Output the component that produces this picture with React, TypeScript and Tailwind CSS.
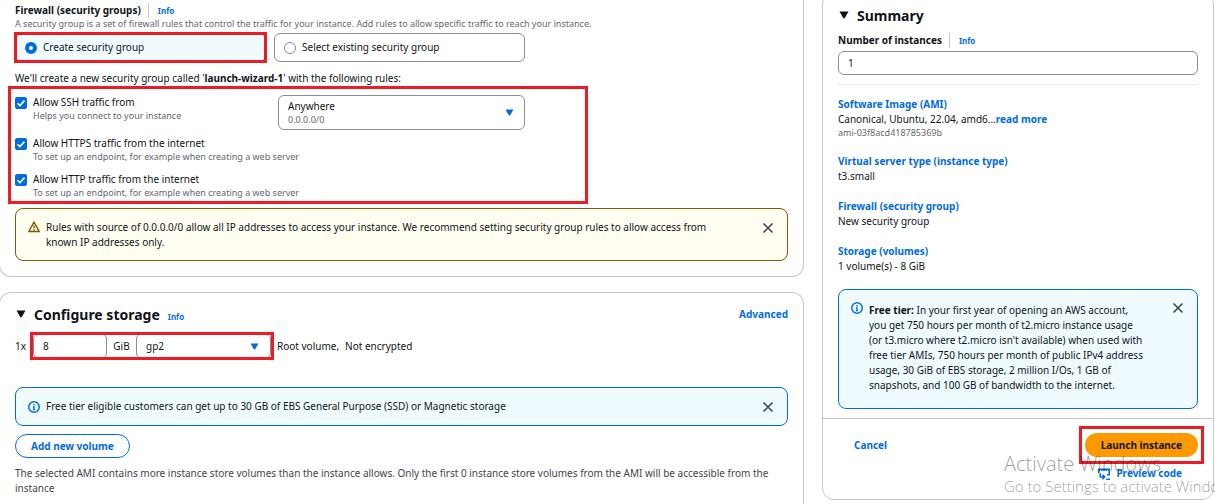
import React, { useState } from 'react';

type Rule = {
  id: string;
  label: string;
  hint: string;
};

type SummaryItem = {
  title: string;
  value: string;
};

const WEB_RULES: Rule[] = [
  { id: 'https', label: 'Allow HTTPS traffic from the internet', hint: 'To set up an endpoint, for example when creating a web server' },
  { id: 'http', label: 'Allow HTTP traffic from the internet', hint: 'To set up an endpoint, for example when creating a web server' },
];

const SUMMARY: SummaryItem[] = [
  { title: 'Virtual server type (instance type)', value: 't3.small' },
  { title: 'Firewall (security group)', value: 'New security group' },
  { title: 'Storage (volumes)', value: '1 volume(s) - 8 GiB' },
];

function Caret({ className }: { className: string }) {
  return (
    <svg viewBox="0 0 10 8" className={className} fill="currentColor" aria-hidden="true">
      <path d="M0.5 0.5h9L5.8 7a.9.9 0 0 1-1.6 0z" />
    </svg>
  );
}

function InfoIcon() {
  return (
    <svg viewBox="0 0 16 16" className="size-3 shrink-0 text-[#006ce0]" fill="none" stroke="currentColor" strokeWidth="2" aria-hidden="true">
      <circle cx="8" cy="8" r="7" />
      <path d="M8 11V8H6.5M8 4v2M6.5 11.5h3" strokeWidth="1.8" />
    </svg>
  );
}

function WarningIcon() {
  return (
    <svg viewBox="0 0 16 16" className="size-3 shrink-0 text-[#855900]" fill="none" stroke="currentColor" strokeWidth="2" strokeLinejoin="round" aria-hidden="true">
      <path d="M8 1.5 15 14H1z" />
      <path d="M8 6v4M8 11v2" strokeWidth="1.8" />
    </svg>
  );
}

function CodeIcon() {
  return (
    <svg viewBox="0 0 16 16" className="size-3 shrink-0" fill="none" stroke="currentColor" strokeWidth="2" aria-hidden="true">
      <path d="M1 7V1.5h14V9h-3" />
      <path d="M1 3h14" strokeDasharray="2 1" />
      <path d="M3 7v5h6M6 9l3 3-3 3M11 15h5" />
    </svg>
  );
}

function Dismiss() {
  return (
    <button type="button" aria-label="Dismiss" className="flex h-[15px] w-4 shrink-0 items-center justify-center text-[#424650]">
      <svg viewBox="0 0 12 12" className="size-3" fill="none" stroke="currentColor" strokeWidth="1.6" aria-hidden="true">
        <path d="M1.5 1.5l9 9M10.5 1.5l-9 9" />
      </svg>
    </button>
  );
}

function Highlight({ className }: { className: string }) {
  return <div className={`pointer-events-none absolute border-3 border-[#ed1c24] ${className}`} />;
}

function InfoLink() {
  return (
    <a href="#info" className="text-[8px] font-bold text-[#006ce0]">
      Info
    </a>
  );
}

function Hint({ children }: { children: React.ReactNode }) {
  return <p className="text-[9px] leading-3 text-[#656871]">{children}</p>;
}

function RuleCheckbox({ rule }: { rule: Rule }) {
  const [checked, setChecked] = useState(true);

  return (
    <div className="flex gap-1.5">
      <span className="relative mt-0.5 size-3 shrink-0">
        <input
          id={rule.id}
          type="checkbox"
          checked={checked}
          onChange={(e) => setChecked(e.target.checked)}
          className="block size-3 appearance-none rounded-xs border border-[#8c8c94] checked:border-[#006ce0] checked:bg-[#006ce0]"
        />
        {checked && (
          <svg viewBox="0 0 12 12" className="pointer-events-none absolute inset-0 size-3" fill="none" stroke="white" strokeWidth="1.6" aria-hidden="true">
            <path d="M2.5 6.2l2.4 2.4L9.5 3.6" />
          </svg>
        )}
      </span>
      <div>
        <label htmlFor={rule.id} className="block">
          {rule.label}
        </label>
        <Hint>{rule.hint}</Hint>
      </div>
    </div>
  );
}

function FirewallCard() {
  const [group, setGroup] = useState('create');
  const tile = 'flex h-[29px] items-center gap-1.5 rounded-md border px-[9px]';
  const radio = 'size-3 appearance-none rounded-full border border-[#8c8c94] checked:border-4 checked:border-[#006ce0] bg-white';

  return (
    <section className="-ml-px rounded-b-xl border border-t-0 border-[#c6c6cd] px-[15px] pt-[3px] pb-[15px]">
      <div className="flex items-center">
        <h3 className="border-r border-[#c6c6cd] pr-[7px] font-bold">Firewall (security groups)</h3>
        <span className="flex pl-[9px]">
          <InfoLink />
        </span>
      </div>
      <Hint>
        A security group is a set of firewall rules that control the traffic for your instance. Add rules to allow specific traffic to reach your instance.
      </Hint>

      <div className="mt-[3px] grid max-w-[510px] grid-cols-2 gap-2">
        <div className="relative">
          <label className={`${tile} border-[#006ce0] bg-[#f0fbff]`}>
            <input type="radio" name="group" checked={group === 'create'} onChange={() => setGroup('create')} className={radio} />
            Create security group
          </label>
          <Highlight className="-inset-px" />
        </div>
        <label className={`${tile} border-[#8c8c94]`}>
          <input type="radio" name="group" checked={group === 'existing'} onChange={() => setGroup('existing')} className={radio} />
          Select existing security group
        </label>
      </div>

      <p className="mt-[9px]">
        We'll create a new security group called '<b>launch-wizard-1</b>' with the following rules:
      </p>

      <div className="relative -mx-[7px] max-w-[580px] px-[7px] pt-[9px] pb-[5px]">
        <div className="flex items-start">
          <div className="w-[263px]">
            <RuleCheckbox rule={{ id: 'ssh', label: 'Allow SSH traffic from', hint: 'Helps you connect to your instance' }} />
          </div>
          <div className="relative w-[247px]">
            <select aria-label="SSH source" className="block h-[35px] w-full appearance-none rounded-md border border-[#8c8c94] bg-white px-[9px] pb-3">
              <option>Anywhere</option>
              <option>My IP</option>
            </select>
            <div className="pointer-events-none absolute bottom-1 left-2.5">
              <Hint>0.0.0.0/0</Hint>
            </div>
            <Caret className="pointer-events-none absolute top-3.5 right-[11px] h-[7px] w-[9px] text-[#006ce0]" />
          </div>
        </div>
        <div className="mt-1.5 flex flex-col gap-[9px]">
          {WEB_RULES.map((rule) => (
            <RuleCheckbox key={rule.id} rule={rule} />
          ))}
        </div>
        <Highlight className="inset-0" />
      </div>

      <div className="mt-1 flex items-start gap-1.5 rounded-lg border border-[#855900] bg-[#fffef0] pt-[11px] pr-[11px] pb-2.5 pl-3">
        <span className="mt-px">
          <WarningIcon />
        </span>
        <p className="flex-1 pr-10">
          Rules with source of 0.0.0.0/0 allow all IP addresses to access your instance. We recommend setting security group rules to allow access from known IP addresses only.
        </p>
        <Dismiss />
      </div>
    </section>
  );
}

function StorageCard() {
  const [size, setSize] = useState('8');

  return (
    <section className="-ml-px mt-[15px] flex-1 rounded-t-xl border border-b-0 border-[#c6c6cd] px-[15px] pt-[9px]">
      <div className="flex h-6 items-center">
        <Caret className="ml-px h-2 w-2.5" />
        <h2 className="ml-2 text-[14px] font-bold">Configure storage</h2>
        <span className="mt-1 ml-2 flex">
          <InfoLink />
        </span>
        <a href="#advanced" className="ml-auto font-bold text-[#006ce0]">
          Advanced
        </a>
      </div>

      <div className="mt-[7px] flex items-center">
        <span className="w-[18px]">1x</span>
        <div className="relative flex items-center">
          <input
            aria-label="Size in GiB"
            value={size}
            onChange={(e) => setSize(e.target.value)}
            className="h-[26px] w-[74px] rounded-md border border-[#8c8c94] px-[9px]"
          />
          <span className="w-[29px] text-center">GiB</span>
          <div className="relative w-[135px]">
            <select aria-label="Volume type" className="block h-[26px] w-full appearance-none rounded-md border border-[#8c8c94] bg-white px-[9px]">
              <option>gp2</option>
              <option>gp3</option>
            </select>
            <Caret className="pointer-events-none absolute top-2.5 right-3 h-[7px] w-[9px] text-[#006ce0]" />
          </div>
          <Highlight className="-inset-x-[3px] -inset-y-px" />
        </div>
        <span className="ml-1.5">Root volume,</span>
        <span className="ml-1.5">Not encrypted</span>
      </div>

      <div className="mt-7 flex items-center gap-1.5 rounded-lg border border-[#006ce0] bg-[#f0fbff] py-[11px] pr-[11px] pl-3">
        <InfoIcon />
        <p className="flex-1">Free tier eligible customers can get up to 30 GB of EBS General Purpose (SSD) or Magnetic storage</p>
        <Dismiss />
      </div>

      <button type="button" className="mt-2 h-6 rounded-full border border-[#006ce0] px-[15px] font-bold text-[#006ce0]">
        Add new volume
      </button>
      <p className="mt-2 text-[#424650]">
        The selected AMI contains more instance store volumes than the instance allows. Only the first 0 instance store volumes from the AMI will be accessible from the instance
      </p>
    </section>
  );
}

function SummaryCard() {
  const [count, setCount] = useState('1');

  return (
    <aside className="-mt-2 self-start rounded-xl border border-[#c6c6cd]">
      <div className="px-[15px] pt-2.5 pb-[9px]">
        <h2 className="flex h-6 items-center gap-2 text-[14px] font-bold">
          <Caret className="ml-px h-2 w-2.5" />
          Summary
        </h2>
        <div className="mt-1.5 flex items-center">
          <label htmlFor="count" className="border-r border-[#c6c6cd] pr-[7px] font-bold">
            Number of instances
          </label>
          <span className="flex pl-[9px]">
            <InfoLink />
          </span>
        </div>
        <input
          id="count"
          value={count}
          onChange={(e) => setCount(e.target.value)}
          className="mt-[3px] block h-6 w-full rounded-md border border-[#8c8c94] px-[9px]"
        />
        <hr className="mt-[9px] border-[#ebebf0]" />

        <div className="mt-3">
          <a href="#ami" className="font-bold text-[#006ce0]">
            Software Image (AMI)
          </a>
          <p>
            Canonical, Ubuntu, 22.04, amd6...
            <a href="#more" className="font-bold text-[#006ce0]">
              read more
            </a>
          </p>
          <Hint>ami-03f8acd418785369b</Hint>
        </div>
        {SUMMARY.map((item) => (
          <div key={item.title} className="mt-[15px]">
            <a href="#edit" className="font-bold text-[#006ce0]">
              {item.title}
            </a>
            <p>{item.value}</p>
          </div>
        ))}

        <div className="mt-[15px] flex items-start gap-1.5 rounded-lg border border-[#006ce0] bg-[#f0fbff] pt-2.5 pr-[11px] pb-[15px] pl-3">
          <span className="mt-0.5">
            <InfoIcon />
          </span>
          <p className="flex-1 pt-[3px] pr-4">
            <b>Free tier:</b> In your first year of opening an AWS account, you get 750 hours per month of t2.micro instance usage (or t3.micro where t2.micro isn't available) when used with free tier AMIs, 750 hours per month of public IPv4 address usage, 30 GiB of EBS storage, 2 million I/Os, 1 GB of snapshots, and 100 GB of bandwidth to the internet.
          </p>
          <Dismiss />
        </div>
      </div>

      <div className="border-t border-[#c6c6cd] px-[15px] pt-3.5 pb-[18px]">
        <div className="flex items-center justify-between">
          <button type="button" className="px-4 font-bold text-[#006ce0]">
            Cancel
          </button>
          <div className="relative">
            <button type="button" className="block h-6 rounded-full bg-[#ff9900] px-4 font-bold">
              Launch instance
            </button>
            <Highlight className="-inset-x-1.5 -inset-y-[7px]" />
          </div>
        </div>
        <div className="mt-[9px] flex justify-end pr-4">
          <a href="#preview" className="flex items-center gap-1.5 font-bold text-[#006ce0]">
            <CodeIcon />
            Preview code
          </a>
        </div>
      </div>
    </aside>
  );
}

export default function App() {
  return (
    <div className="relative grid min-h-screen grid-cols-[1fr_392px] gap-[18px] overflow-hidden bg-white pr-px font-['Noto_Sans',sans-serif] text-[10px] leading-[15px] text-[#0f141a]">
      <main className="flex flex-col">
        <FirewallCard />
        <StorageCard />
      </main>
      <SummaryCard />

      <div className="pointer-events-none absolute bottom-2 left-[1004px] font-['Open_Sans',sans-serif] font-light whitespace-nowrap text-black/40">
        <p className="text-[20px] leading-6">Activate Windows</p>
        <p className="text-[15px] leading-5">Go to Settings to activate Windows.</p>
      </div>
    </div>
  );
}
